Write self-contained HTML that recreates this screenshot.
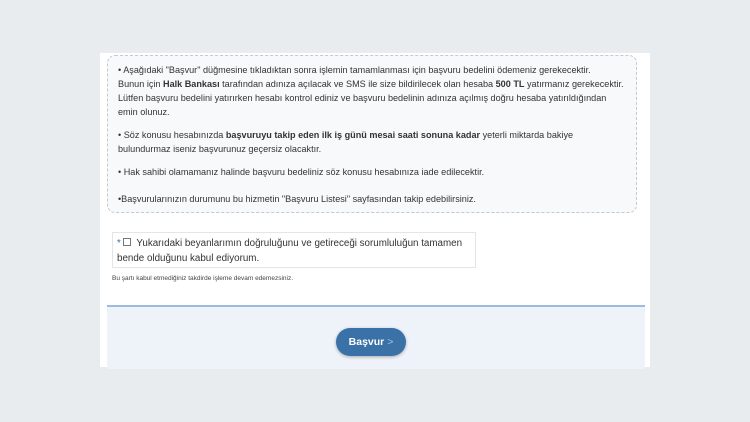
<!DOCTYPE html><html><head><style>
body{margin:0;width:750px;height:422px;background:#e9ecee;font-family:"Liberation Sans",sans-serif;position:relative;overflow:hidden;color:#333}
.panel{position:absolute;left:100px;top:53px;width:550px;height:314px;background:#fff}
.box{position:absolute;left:7px;top:2px;width:530px;height:158px;border:1px dashed #c4c9ce;border-radius:8px;background:#f7f9fb;font-size:9.1px;line-height:14px;padding:7px 0 0 10px;box-sizing:border-box;white-space:nowrap}
.box p{margin:0 0 9px}
.chk{position:absolute;left:12px;top:179px;width:364px;height:36px;border:1px solid #e3e6e9;box-sizing:border-box;font-size:9.8px;line-height:15px;padding:3px 0 0 4px;white-space:nowrap}
.cb{display:inline-block;width:6px;height:6px;border:1px solid #777;margin:0 3px 0 2px;vertical-align:0}
.note{position:absolute;left:12px;top:222px;font-size:6.5px;color:#444}
.foot{position:absolute;left:7px;top:252px;width:538px;height:62px;background:#eef3f9;border-top:2px solid #9bbcdc}
.btn{position:absolute;left:229px;top:21px;width:70px;height:28px;border-radius:14px;background:#3a72a8;color:#fff;font-size:10.5px;font-weight:bold;line-height:28px;text-align:center;box-shadow:0 1px 3px rgba(0,0,0,.3)}
</style></head><body><div class="panel">
<div class="box">
<p>• Aşağıdaki "Başvur" düğmesine tıkladıktan sonra işlemin tamamlanması için başvuru bedelini ödemeniz gerekecektir.<br>Bunun için <b>Halk Bankası</b> tarafından adınıza açılacak ve SMS ile size bildirilecek olan hesaba <b>500 TL</b> yatırmanız gerekecektir.<br>Lütfen başvuru bedelini yatırırken hesabı kontrol ediniz ve başvuru bedelinin adınıza açılmış doğru hesaba yatırıldığından<br>emin olunuz.</p>
<p>• Söz konusu hesabınızda <b>başvuruyu takip eden ilk iş günü mesai saati sonuna kadar</b> yeterli miktarda bakiye<br>bulundurmaz iseniz başvurunuz geçersiz olacaktır.</p>
<p>• Hak sahibi olamamanız halinde başvuru bedeliniz söz konusu hesabınıza iade edilecektir.</p>
<p style="margin-top:13px">•Başvurularınızın durumunu bu hizmetin "Başvuru Listesi" sayfasından takip edebilirsiniz.</p>
</div>
<div class="chk"><span style="color:#3a72a8">*</span><span class="cb"></span> Yukarıdaki beyanlarımın doğruluğunu ve getireceği sorumluluğun tamamen<br>bende olduğunu kabul ediyorum.</div>
<div class="note">Bu şartı kabul etmediğiniz takdirde işleme devam edemezsiniz.</div>
<div class="foot"><div class="btn">Başvur <span style="font-weight:normal;color:#a9c4e0">&gt;</span></div></div>
</div></body></html>
